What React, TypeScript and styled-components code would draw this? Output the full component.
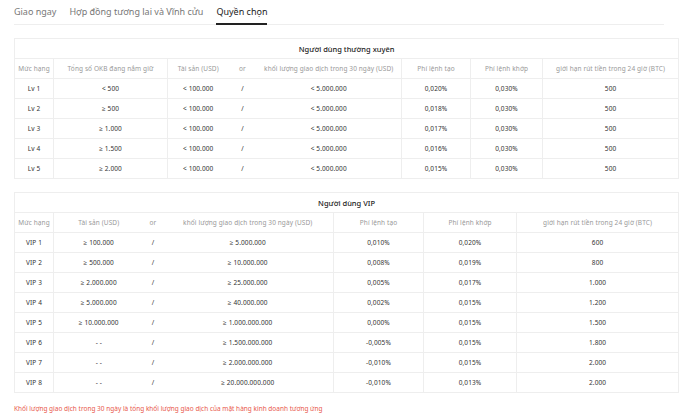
import React from "react";
import styled, { createGlobalStyle } from "styled-components";

const G = createGlobalStyle`
  body { margin: 0; background: #fff; font-family: "Noto Sans", "Open Sans", sans-serif; }
`;
const Page = styled.div`padding: 0 14px 0 14px; width: 672px; box-sizing: border-box;`;
const Tabs = styled.div`display: flex; gap: 13px; border-bottom: 1px solid #eee; height: 24px; align-items: flex-end; margin-right: -6px;`;
const Tab = styled.div<{ $active?: boolean }>`
  font-size: 9px; color: ${p => (p.$active ? "#222" : "#777")}; padding-bottom: 4px; line-height: 14px;
  border-bottom: 2px solid ${p => (p.$active ? "#222" : "transparent")}; margin-bottom: -1px;
`;
const Table = styled.table`
  width: 664px; table-layout: fixed; border-collapse: collapse; border: 1px solid #eee;
  margin-top: 13px; font-size: 6.5px; color: #333;
`;
const Title = styled.th`height: 19px; padding: 0; font-size: 7.5px; font-weight: 500; color: #222; border-bottom: 1px solid #eee;`;
const Cell = styled.td<{ $head?: boolean; $sep?: boolean }>`
  height: 19px; padding: 0; line-height: 10px; text-align: center; white-space: nowrap; overflow: hidden;
  color: ${p => (p.$head ? "#999" : "#333")};
  border-bottom: 1px solid #eee;
  border-right: ${p => (p.$sep ? "1px solid #eee" : "none")};
  letter-spacing: 0.1px;
`;
const Note = styled.div`margin-top: 11px; font-size: 6.5px; color: #e8584c;`;

type Row = string[];
function T({ title, widths, seps, head, rows }: { title: string; widths: number[]; seps: boolean[]; head: Row; rows: Row[] }) {
  return (
    <Table>
      <colgroup>{widths.map((w, i) => <col key={i} style={{ width: w }} />)}</colgroup>
      <thead>
        <tr><Title colSpan={widths.length}>{title}</Title></tr>
        <tr>{head.map((h, i) => <Cell key={i} $head $sep={seps[i]}>{h}</Cell>)}</tr>
      </thead>
      <tbody>
        {rows.map((r, j) => <tr key={j}>{r.map((c, i) => <Cell key={i} $sep={seps[i]}>{c}</Cell>)}</tr>)}
      </tbody>
    </Table>
  );
}

const r1 = [
  ["Lv 1", "< 500", "< 100.000", "/", "< 5.000.000", "0,020%", "0,030%", "500"],
  ["Lv 2", "≥ 500", "< 100.000", "/", "< 5.000.000", "0,018%", "0,030%", "500"],
  ["Lv 3", "≥ 1.000", "< 100.000", "/", "< 5.000.000", "0,017%", "0,030%", "500"],
  ["Lv 4", "≥ 1.500", "< 100.000", "/", "< 5.000.000", "0,016%", "0,030%", "500"],
  ["Lv 5", "≥ 2.000", "< 100.000", "/", "< 5.000.000", "0,015%", "0,030%", "500"],
];
const r2 = [
  ["VIP 1", "≥ 100.000", "/", "≥ 5.000.000", "0,010%", "0,020%", "600"],
  ["VIP 2", "≥ 500.000", "/", "≥ 10.000.000", "0,008%", "0,019%", "800"],
  ["VIP 3", "≥ 2.000.000", "/", "≥ 25.000.000", "0,005%", "0,017%", "1.000"],
  ["VIP 4", "≥ 5.000.000", "/", "≥ 40.000.000", "0,002%", "0,015%", "1.200"],
  ["VIP 5", "≥ 10.000.000", "/", "≥ 1.000.000.000", "0,000%", "0,015%", "1.500"],
  ["VIP 6", "- -", "/", "≥ 1.500.000.000", "-0,005%", "0,015%", "1.800"],
  ["VIP 7", "- -", "/", "≥ 2.000.000.000", "-0,010%", "0,015%", "2.000"],
  ["VIP 8", "- -", "/", "≥ 20.000.000.000", "-0,010%", "0,013%", "2.000"],
];

export default function App() {
  return (
    <Page>
      <G />
      <Tabs>
        <Tab>Giao ngay</Tab>
        <Tab>Hợp đồng tương lai và Vĩnh cửu</Tab>
        <Tab $active>Quyền chọn</Tab>
      </Tabs>
      <T
        title="Người dùng thường xuyên"
        widths={[39, 114, 61, 28, 145, 69, 72, 136]}
        seps={[true, true, false, false, true, true, true, false]}
        head={["Mức hạng", "Tổng số OKB đang nắm giữ", "Tài sản (USD)", "or", "khối lượng giao dịch trong 30 ngày (USD)", "Phí lệnh tạo", "Phí lệnh khớp", "giới hạn rút tiền trong 24 giờ (BTC)"]}
        rows={r1}
      />
      <T
        title="Người dùng VIP"
        widths={[39, 90, 19, 171, 90, 93, 162]}
        seps={[true, false, false, true, true, true, false]}
        head={["Mức hạng", "Tài sản (USD)", "or", "khối lượng giao dịch trong 30 ngày (USD)", "Phí lệnh tạo", "Phí lệnh khớp", "giới hạn rút tiền trong 24 giờ (BTC)"]}
        rows={r2}
      />
      <Note>Khối lượng giao dịch trong 30 ngày là tổng khối lượng giao dịch của mặt hàng kinh doanh tương ứng</Note>
    </Page>
  );
}
